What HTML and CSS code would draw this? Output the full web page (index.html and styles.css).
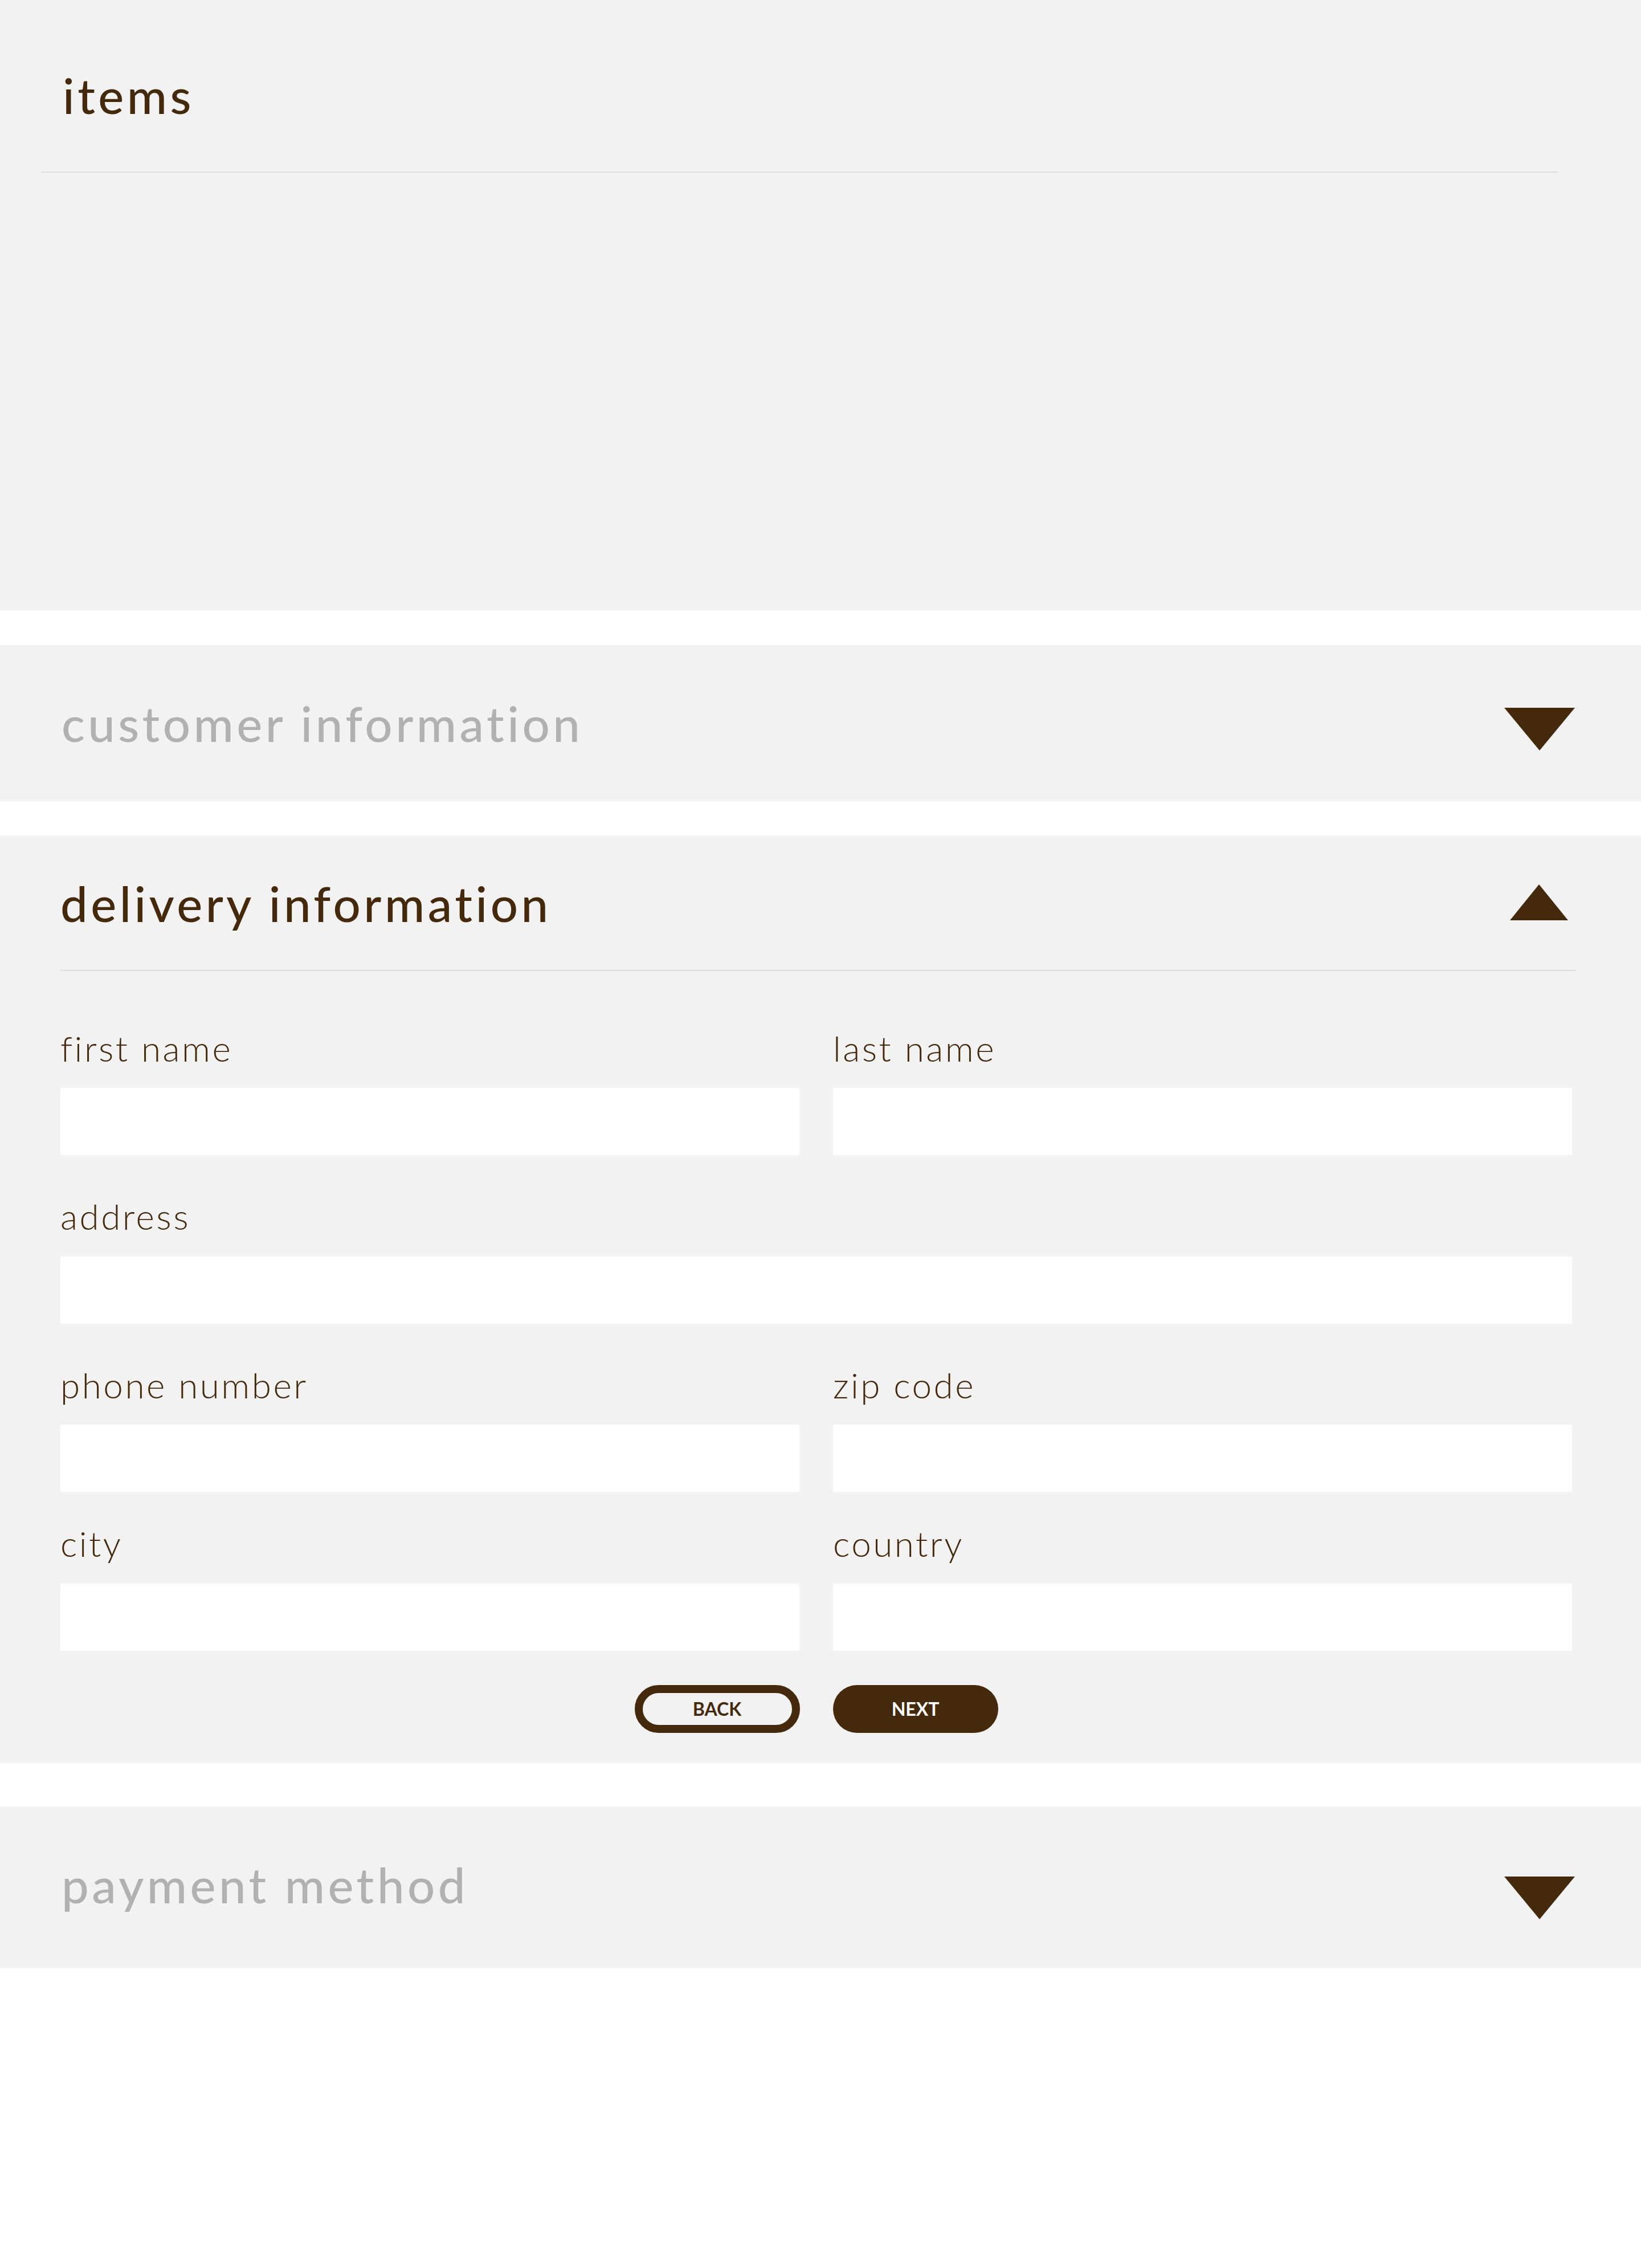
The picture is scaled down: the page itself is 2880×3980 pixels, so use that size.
FILE: index.html
```html
<!DOCTYPE html>
<html lang="en">
<head>
    <meta charset="UTF-8">
    <meta name="viewport" content="width=device-width, initial-scale=1.0">
    <title>Checkout</title>
    <link rel="stylesheet" href="styles.css">
</head>
<body>
    <div class="checkout">
        <section class="panel items">
            <div class="items-head">
                <h2 class="panel-title">items</h2>
            </div>
        </section>

        <section class="panel collapsed customer">
            <h2 class="panel-title muted">customer information</h2>
            <svg class="caret caret-down" width="124" height="75" viewBox="0 0 124 75"><polygon points="0,0 124,0 62,75"/></svg>
        </section>

        <section class="panel delivery">
            <div class="panel-head">
                <h2 class="panel-title">delivery information</h2>
                <svg class="caret caret-up" width="102" height="63" viewBox="0 0 102 63"><polygon points="51,0 102,63 0,63"/></svg>
            </div>
            <form class="delivery-form" onsubmit="return false">
                <div class="form-grid">
                    <label class="field">
                        <span class="field-label">first name</span>
                        <input class="field-input" type="text" name="first-name">
                    </label>
                    <label class="field">
                        <span class="field-label">last name</span>
                        <input class="field-input" type="text" name="last-name">
                    </label>
                    <label class="field field-wide">
                        <span class="field-label">address</span>
                        <input class="field-input" type="text" name="address">
                    </label>
                    <label class="field">
                        <span class="field-label">phone number</span>
                        <input class="field-input" type="tel" name="phone">
                    </label>
                    <label class="field">
                        <span class="field-label">zip code</span>
                        <input class="field-input" type="text" name="zip">
                    </label>
                    <label class="field field-tight">
                        <span class="field-label">city</span>
                        <input class="field-input" type="text" name="city">
                    </label>
                    <label class="field field-tight">
                        <span class="field-label">country</span>
                        <input class="field-input" type="text" name="country">
                    </label>
                </div>
                <div class="form-actions">
                    <button class="btn btn-outline" type="button">BACK</button>
                    <button class="btn btn-solid" type="submit">NEXT</button>
                </div>
            </form>
        </section>

        <section class="panel collapsed payment">
            <h2 class="panel-title muted">payment method</h2>
            <svg class="caret caret-down" width="124" height="75" viewBox="0 0 124 75"><polygon points="0,0 124,0 62,75"/></svg>
        </section>
    </div>
</body>
</html>
```

FILE: styles.css
```css
body {
    margin: 0;
    font-family: "Lato", "Noto Sans", sans-serif;
    background-color: #fff;
    color: #45290c;
}

.panel {
    background-color: #f2f2f2;
}

.panel-title {
    margin: 0;
    font-size: 85px;
    font-weight: 500;
    line-height: 1.2;
    letter-spacing: 5.5px;
}

.muted {
    color: #b1b1b1;
}

.caret {
    display: block;
    flex-shrink: 0;
    fill: #45290c;
}

/* items */
.items {
    height: 1071px;
    box-sizing: border-box;
    padding-top: 116px;
}

.items-head {
    margin: 0 147px 0 72px;
    padding: 0 0 83px 38px;
    border-bottom: 2px solid #dcdcdc;
}

/* closed sections */
.collapsed {
    display: flex;
    justify-content: space-between;
    align-items: flex-start;
    padding: 86px 116px 86px 108px;
}

.collapsed .caret-down {
    margin-top: 24px;
}

.customer {
    margin-top: 61px;
}

.payment {
    margin-top: 76px;
}

.payment .caret-down {
    margin-top: 37px;
}

/* delivery */
.delivery {
    margin-top: 60px;
    padding: 68px 121px 53px 106px;
}

.panel-head {
    display: flex;
    justify-content: space-between;
    align-items: flex-start;
    margin-right: -7px;
    padding: 0 14px 66px 0;
    border-bottom: 2px solid #dcdcdc;
}

.caret-up {
    margin-top: 18px;
}

.delivery-form {
    padding-top: 98px;
}

.form-grid {
    display: grid;
    grid-template-columns: 1fr 1fr;
    column-gap: 59px;
    row-gap: 70px;
}

.field {
    display: block;
}

.field-wide {
    grid-column: 1 / -1;
}

.field-tight {
    margin-top: -17px;
}

.field-label {
    display: block;
    margin-bottom: 33px;
    font-size: 62px;
    font-weight: 300;
    line-height: 1.2;
    letter-spacing: 3.5px;
}

.field-input {
    display: block;
    width: 100%;
    height: 118px;
    box-sizing: border-box;
    padding: 0 24px;
    border: none;
    background-color: #fff;
    font-family: inherit;
    font-size: 48px;
    color: inherit;
    outline: none;
}

.form-actions {
    display: flex;
    justify-content: center;
    gap: 58px;
    margin-top: 60px;
}

.btn {
    width: 290px;
    height: 84px;
    box-sizing: border-box;
    border-radius: 42px;
    font-family: inherit;
    font-size: 32px;
    font-weight: 700;
    cursor: pointer;
}

.btn-outline {
    background-color: transparent;
    border: 14px solid #45290c;
    color: #45290c;
}

.btn-solid {
    background-color: #45290c;
    border: none;
    color: #fff;
}
```
